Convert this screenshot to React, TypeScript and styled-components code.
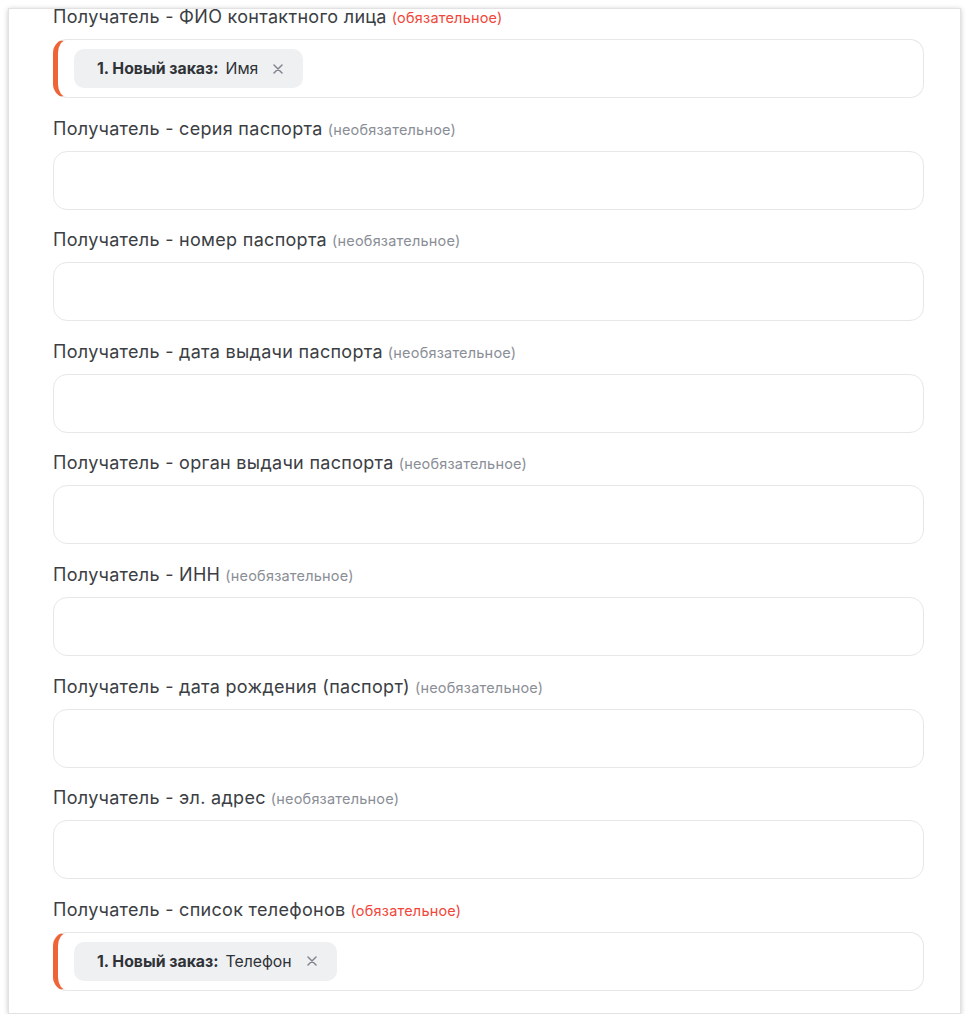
import React from "react";
import styled, { createGlobalStyle } from "styled-components";

const GlobalStyle = createGlobalStyle`
  html, body {
    margin: 0;
    padding: 0;
    background: #ffffff;
  }
  body {
    font-family: Inter, "Noto Sans", "Liberation Sans", sans-serif;
    -webkit-font-smoothing: antialiased;
  }
`;

const Page = styled.div`
  padding: 8px 8px 0 8px;
  width: 970px;
  box-sizing: border-box;
`;

const Card = styled.div`
  width: 953px;
  height: 1006px;
  box-sizing: border-box;
  background: #ffffff;
  border: 1px solid #e2e2e2;
  box-shadow: 0 1px 5px rgba(0, 0, 0, 0.22);
  overflow: hidden;
  padding: 0 36px 0 44px;
`;

const FieldList = styled.div`
  margin-top: -3px;
  display: flex;
  flex-direction: column;
`;

const Field = styled.div`
  display: flex;
  flex-direction: column;
  gap: 11px;
  margin-bottom: 19.6px;
`;

const Label = styled.div`
  height: 22px;
  font-size: 18px;
  line-height: 22px;
  letter-spacing: 0.3px;
  color: #3b3e43;
  white-space: nowrap;
`;

const Hint = styled.span<{ $required?: boolean }>`
  font-size: 14.5px;
  line-height: 1;
  letter-spacing: 0.2px;
  color: ${(p) => (p.$required ? "#f0473a" : "#8a8e96")};
  margin-left: 5px;
`;

const Input = styled.div<{ $accent?: boolean }>`
  height: 59px;
  box-sizing: border-box;
  border: 1px solid #e6e7e9;
  border-left: ${(p) => (p.$accent ? "5px solid #ee6437" : "1px solid #e6e7e9")};
  border-radius: 14px;
  background: #ffffff;
  display: flex;
  align-items: center;
  padding-left: ${(p) => (p.$accent ? "16px" : "20px")};
`;

const Chip = styled.div`
  height: 39px;
  display: inline-flex;
  align-items: center;
  gap: 7px;
  padding: 0 20px 0 23px;
  background: #eef0f2;
  border-radius: 10px;
  font-size: 15.8px;
  color: #2f3237;
`;

const ChipStep = styled.span`
  font-weight: 700;
`;

const ChipClose = styled.span`
  display: inline-flex;
  margin-left: 8px;
  color: #80858d;
`;

type FieldDef = {
  label: string;
  required?: boolean;
  chip?: string;
};

const fields: FieldDef[] = [
  { label: "Получатель - ФИО контактного лица", required: true, chip: "Имя" },
  { label: "Получатель - серия паспорта" },
  { label: "Получатель - номер паспорта" },
  { label: "Получатель - дата выдачи паспорта" },
  { label: "Получатель - орган выдачи паспорта" },
  { label: "Получатель - ИНН" },
  { label: "Получатель - дата рождения (паспорт)" },
  { label: "Получатель - эл. адрес" },
  { label: "Получатель - список телефонов", required: true, chip: "Телефон" },
  { label: "Получатель - код органа (по данным ОЗСК)" },
];

const CloseIcon = () => (
  <svg width="10" height="10" viewBox="0 0 10 10" fill="none">
    <path d="M1 1L9 9M9 1L1 9" stroke="currentColor" strokeWidth="1.5" strokeLinecap="round" />
  </svg>
);

export default function App() {
  return (
    <Page>
      <GlobalStyle />
      <Card>
        <FieldList>
          {fields.map((f) => (
            <Field key={f.label}>
              <Label>
                {f.label}
                <Hint $required={f.required}>
                  {f.required ? "(обязательное)" : "(необязательное)"}
                </Hint>
              </Label>
              <Input $accent={!!f.chip}>
                {f.chip && (
                  <Chip>
                    <ChipStep>1. Новый заказ:</ChipStep>
                    <span>{f.chip}</span>
                    <ChipClose>
                      <CloseIcon />
                    </ChipClose>
                  </Chip>
                )}
              </Input>
            </Field>
          ))}
        </FieldList>
      </Card>
    </Page>
  );
}
